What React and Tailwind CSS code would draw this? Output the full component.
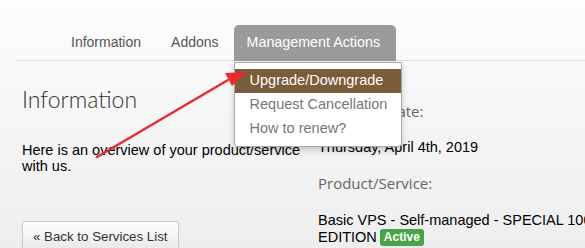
import React from "react";

const sans = { fontFamily: '"Liberation Sans", Arial, sans-serif' };
const light = { fontFamily: '"Open Sans", sans-serif' };

const menuItems = ["Upgrade/Downgrade", "Request Cancellation", "How to renew?"];

const App = () => {
  return (
    <div
      className="relative w-[585px] h-[248px] overflow-hidden bg-gradient-to-b from-[#fdfdfd] to-[#eeeeee] text-[#222]"
      style={sans}
    >
      {/* tabs */}
      <div className="pl-4 pt-[25px]">
        <div className="flex h-[36px] border-b border-[#dddddd] pl-[40px]">
          <div className="px-[15px] flex items-center text-[14px] text-[#555]">Information</div>
          <div className="px-[15px] flex items-center text-[14px] text-[#555]">Addons</div>
          <div className="relative">
            <div className="h-[36px] pl-[13px] pr-[16px] flex items-center text-[14.3px] text-white bg-[#9a9a9a] rounded-t-[5px]">
              Management Actions
            </div>
            {/* dropdown */}
            <div className="absolute left-0 top-[37px] w-[168px] z-10 bg-white border border-[#a8a8a8] rounded-b-[4px] shadow-[0_3px_6px_rgba(0,0,0,0.2)] pt-[6px] pb-[5px]">
              {menuItems.map((item, i) => (
                <div
                  key={item}
                  className={
                    i === 0
                      ? "h-[24px] pl-[15px] flex items-center text-[14.5px] text-white bg-[#7a5b3a]"
                      : "h-[24px] pl-[15px] flex items-center text-[14.5px] text-[#777]"
                  }
                >
                  {item}
                </div>
              ))}
            </div>
          </div>
        </div>
      </div>

      {/* body */}
      <div className="flex pl-[22px] pt-[25px]">
        <div className="w-[296px] shrink-0">
          <h1 className="-mt-[2px] text-[23px] font-light text-[#333] leading-[30px]" style={{ fontFamily: 'Lato, sans-serif' }}>
            Information
          </h1>
          <p className="mt-[28px] text-[14.5px] leading-[16px] text-black">
            Here is an overview of your product/service with us.
          </p>
          <button className="mt-[47px] h-[32px] px-[10px] text-[13.3px] text-[#333] border border-[#cccccc] rounded-[3px] bg-gradient-to-b from-white to-[#e6e6e6] shadow-[0_1px_2px_rgba(0,0,0,0.08)]">
            « Back to Services List
          </button>
        </div>
        <div className="w-[280px] shrink-0 whitespace-nowrap">
          <div className="mt-[7px] h-[36px] flex items-center text-[15px] text-[#666]" style={light}>
            Purchase Date:
          </div>
          <div className="mt-[1px] h-[36px] flex items-center text-[14.5px] text-black">Thursday, April 4th, 2019</div>
          <div className="-mt-[1px] h-[36px] flex items-center text-[15px] text-[#666]" style={light}>
            Product/Service:
          </div>
          <div className="mt-[11px] text-[14.5px] leading-[17px] text-black">
            <div>Basic VPS - Self-managed - SPECIAL 100</div>
            <div className="flex items-center">
              EDITION
              <span className="ml-[3px] px-[4px] h-[17px] flex items-center rounded-[3px] bg-[#47a447] text-white text-[12px] font-bold">
                Active
              </span>
            </div>
            <div className="text-[#333]">vh3</div>
          </div>
        </div>
      </div>

      {/* annotation arrow */}
      <svg className="absolute inset-0 z-20 pointer-events-none" width="585" height="248">
        <line x1="97" y1="157" x2="228" y2="80" stroke="#ec2a2e" strokeWidth="2.5" strokeLinecap="round" />
        <polygon points="246,72 225,73 232,86" fill="#ec2a2e" />
      </svg>
    </div>
  );
};

export default App;
